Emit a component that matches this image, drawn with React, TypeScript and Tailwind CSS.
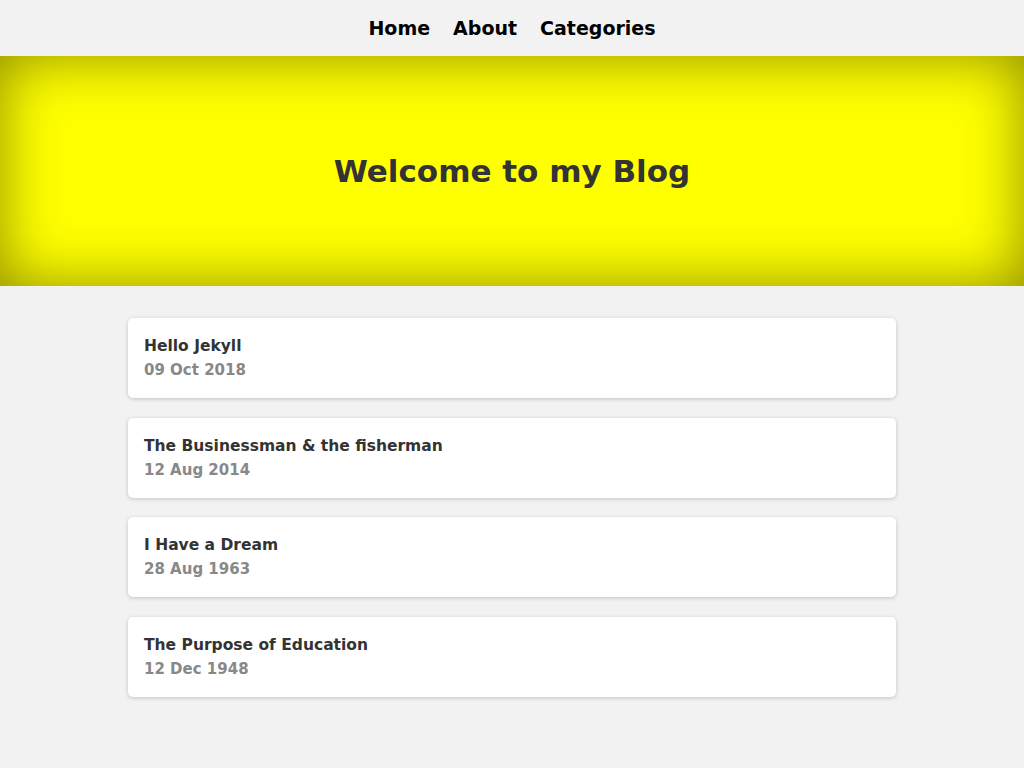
const posts = [
  { title: "Hello Jekyll", date: "09 Oct 2018" },
  { title: "The Businessman & the fisherman", date: "12 Aug 2014" },
  { title: "I Have a Dream", date: "28 Aug 1963" },
  { title: "The Purpose of Education", date: "12 Dec 1948" },
];

export default function App() {
  return (
    <div className="min-h-[768px] bg-[#f2f2f2] font-['DejaVu_Sans','Liberation_Sans',sans-serif]">
      <nav className="h-14 flex items-center justify-center gap-[23px] text-[19px] font-bold text-black">
        <a href="#">Home</a>
        <a href="#">About</a>
        <a href="#">Categories</a>
      </nav>
      <header className="h-[230px] bg-[#ffff00] shadow-[inset_0_0_60px_rgba(0,0,0,0.45)] flex items-center justify-center">
        <h1 className="text-[31px] font-bold text-[#333]">Welcome to my Blog</h1>
      </header>
      <main className="w-[768px] mx-auto pt-8 flex flex-col gap-[19.5px]">
        {posts.map((post) => (
          <div
            key={post.title}
            className="bg-white rounded-[5px] shadow-[0_1px_4px_rgba(0,0,0,0.2)] px-4 py-4"
          >
            <div className="text-[15.5px] leading-6 font-bold text-[#333]">{post.title}</div>
            <div className="text-[15px] leading-6 font-bold text-[#888]">{post.date}</div>
          </div>
        ))}
      </main>
    </div>
  );
}
